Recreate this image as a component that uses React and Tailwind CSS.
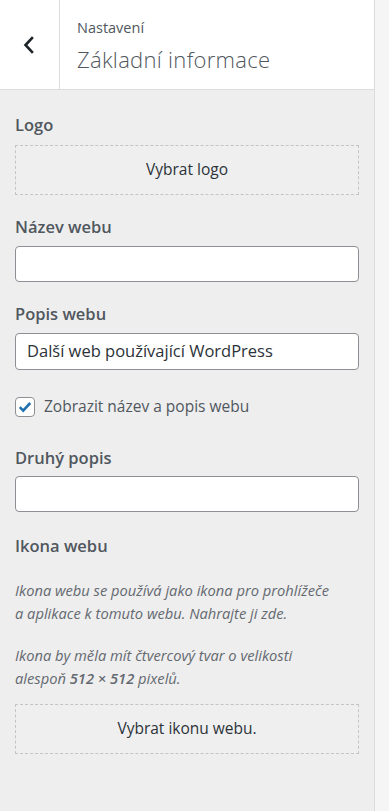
import React from "react";

export default function App() {
  const font = { fontFamily: '"Open Sans", "Noto Sans", sans-serif' };
  return (
    <div className="flex w-[389px] min-h-[811px] bg-[#f5f5f5]" style={font}>
      <div className="flex w-[375px] flex-col border-r border-[#dcdcde] bg-[#eeeeee]">
        <div className="flex h-[90px] border-b border-[#dcdcde] bg-white">
          <div className="flex w-[60px] items-center justify-center border-r border-[#dcdcde]">
            <svg width="14" height="18" viewBox="0 0 14 18" className="ml-[-2px]">
              <path d="M10 2 L3.5 9 L10 16" fill="none" stroke="#1d2327" strokeWidth="2.6" strokeLinecap="square" />
            </svg>
          </div>
          <div className="flex flex-col pl-[17px] pt-[17px]">
            <span className="text-[14.5px] leading-[22px] text-[#50575e]">Nastavení</span>
            <span className="mt-[6px] text-[22px] font-light leading-[28px] tracking-[0.3px] text-[#50575e]">Základní informace</span>
          </div>
        </div>

        <div className="flex flex-col px-[15px] pt-[23px] pb-[40px]">
          <div className="text-[16.5px] font-semibold leading-[24px] text-[#50575e]">Logo</div>
          <div className="mt-[8px] flex h-[50px] items-center justify-center border border-dashed border-[#c3c4c7] bg-[#efeff0] text-[15.5px] text-[#2c3338]">
            Vybrat logo
          </div>

          <div className="mt-[20px] text-[16.5px] font-semibold leading-[24px] text-[#50575e]">Název webu</div>
          <div className="mt-[7px] h-[36px] rounded-[4px] border border-[#8c8f94] bg-white" />

          <div className="mt-[20px] text-[16.5px] font-semibold leading-[24px] text-[#50575e]">Popis webu</div>
          <div className="mt-[7px] flex h-[37px] items-center rounded-[4px] border border-[#8c8f94] bg-white px-[11px] text-[16.5px] text-[#2c3338]">
            Další web používající WordPress
          </div>

          <div className="mt-[25px] flex h-[24px] items-center">
            <div className="flex h-[20px] w-[20px] items-center justify-center rounded-[4px] border border-[#8c8f94] bg-white">
              <svg width="14" height="12" viewBox="0 0 14 12">
                <path d="M1.8 6.2 L5.2 9.6 L12.2 2" fill="none" stroke="#2271b1" strokeWidth="2.6" />
              </svg>
            </div>
            <span className="ml-[9px] text-[15.5px] text-[#50575e]">Zobrazit název a popis webu</span>
          </div>

          <div className="mt-[27px] text-[16.5px] font-semibold leading-[24px] text-[#50575e]">Druhý popis</div>
          <div className="mt-[6px] h-[36px] rounded-[4px] border border-[#8c8f94] bg-white" />

          <div className="mt-[22px] text-[16.5px] font-semibold leading-[24px] text-[#50575e]">Ikona webu</div>
          <p className="mt-[21px] text-[14.7px] italic leading-[23px] text-[#646970]">
            Ikona webu se používá jako ikona pro prohlížeče
            <br />
            a aplikace k tomuto webu. Nahrajte ji zde.
          </p>
          <p className="mt-[19px] text-[14.7px] italic leading-[23px] text-[#646970]">
            Ikona by měla mít čtvercový tvar o velikosti
            <br />
            alespoň <b className="font-semibold">512 × 512</b> pixelů.
          </p>
          <div className="mt-[14px] flex h-[50px] items-center justify-center border border-dashed border-[#c3c4c7] bg-[#efeff0] text-[15.5px] text-[#2c3338]">
            Vybrat ikonu webu.
          </div>
        </div>
      </div>
    </div>
  );
}
